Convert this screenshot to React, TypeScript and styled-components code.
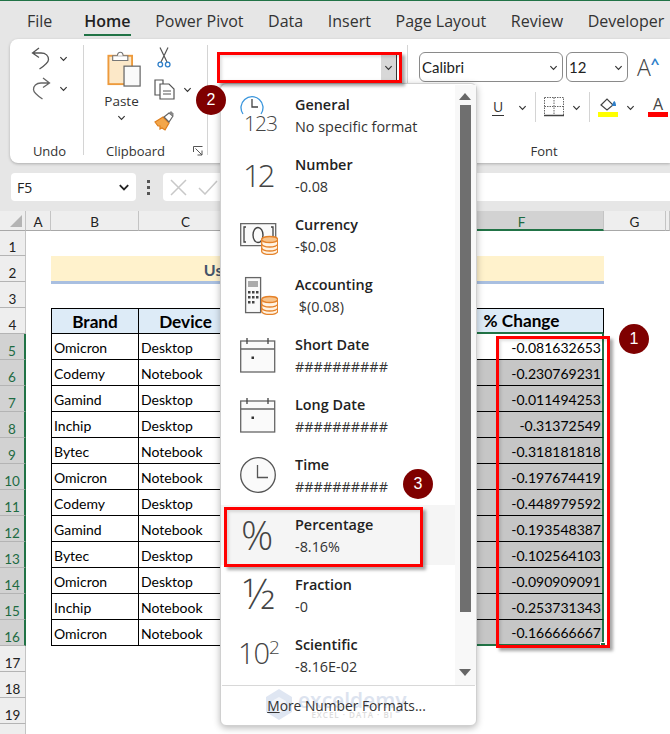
import React from "react";
import styled, { createGlobalStyle } from "styled-components";

const GlobalStyle = createGlobalStyle`
  html, body { margin: 0; padding: 0; background: #e6e6e6; }
  * { box-sizing: border-box; }
`;

const GREEN = "#217346";
const UI_FONT = `"Open Sans", "Noto Sans", sans-serif`;
const CELL_FONT = `Lato, "Liberation Sans", sans-serif`;

const tabs = ["File", "Home", "Power Pivot", "Data", "Insert", "Page Layout", "Review", "Developer"];

const tableRows = [
  ["Omicron", "Desktop", "-0.081632653"],
  ["Codemy", "Notebook", "-0.230769231"],
  ["Gamind", "Desktop", "-0.011494253"],
  ["Inchip", "Desktop", "-0.31372549"],
  ["Bytec", "Notebook", "-0.318181818"],
  ["Omicron", "Notebook", "-0.197674419"],
  ["Codemy", "Desktop", "-0.448979592"],
  ["Gamind", "Notebook", "-0.193548387"],
  ["Bytec", "Desktop", "-0.102564103"],
  ["Omicron", "Desktop", "-0.090909091"],
  ["Inchip", "Notebook", "-0.253731343"],
  ["Omicron", "Notebook", "-0.166666667"],
];

const columns = ["A", "B", "C", "D", "E", "F", "G", ""];

const Chevron: React.FC<{ size?: number; weight?: number; color?: string }> = ({ size = 9, weight = 1.3, color = "#333" }) => (
  <svg width={size} height={size} viewBox="0 0 10 10" fill="none" stroke={color} strokeWidth={weight}>
    <path d="M1.5 3.5 5 7l3.5-3.5" />
  </svg>
);

const UndoIcon = () => (
  <svg width="20" height="23" viewBox="0 0 20 23" fill="none" stroke="#555" strokeWidth="1.3">
    <path d="M8 1 1.5 6 8 10.5M1.5 6H10c5 0 7.5 3 7.5 6.5 0 3-3 5.500-9 9.500" />
  </svg>
);

const RedoIcon = () => (
  <svg width="20" height="23" viewBox="0 0 20 23" fill="none" stroke="#666" strokeWidth="1.3">
    <path d="M12 1 18.500 6 12 10.500M18.500 6H10C5 6 2.500 9 2.500 12.500c0 3 3 5.500 9 9.500" />
  </svg>
);

const PasteIcon = () => (
  <svg width="35" height="38" viewBox="0 0 37 38">
    <rect x="1.500" y="5" width="25" height="30" fill="#fce8c8" stroke="#ed9a3c" strokeWidth="2" />
    <path d="M6 5h16v5H6z" fill="#fff" stroke="#777" strokeWidth="1.200" />
    <path d="M11 5c0-5 6-5 6 0" fill="#fff" stroke="#777" strokeWidth="1.200" />
    <rect x="18" y="16" width="17" height="21" fill="#fafafa" stroke="#666" strokeWidth="1.300" />
  </svg>
);

const ScissorsIcon = () => (
  <svg width="14" height="21" viewBox="0 0 14 21" fill="none">
    <path d="M3 0.500 10 15M11 0.500 4 15" stroke="#555" strokeWidth="1.200" />
    <circle cx="3.300" cy="17.500" r="2.300" stroke="#2f7fc9" strokeWidth="1.300" />
    <circle cx="10.700" cy="17.500" r="2.300" stroke="#2f7fc9" strokeWidth="1.300" />
  </svg>
);

const CopyIcon = () => (
  <svg width="21" height="21" viewBox="0 0 21 21" fill="#fff" stroke="#555" strokeWidth="1.200">
    <path d="M1 1h8v15H1z" />
    <path d="M6 5h9l5 5v10H6z" />
    <path d="M9 12h8M9 15h8" strokeWidth="1" />
  </svg>
);

const BrushIcon = () => (
  <svg width="21" height="20" viewBox="0 0 21 20">
    <path d="M1 11 9 6l6 6-4 7-3-2-2 1 0-3-2 0z" fill="#f3a64a" stroke="#de7e1c" strokeWidth="1.200" />
    <path d="M10 6 15 2l4 3-4 6z" fill="#fff" stroke="#666" strokeWidth="1.200" />
    <path d="M15 2 17 0l3 3-2 2" fill="#888" />
  </svg>
);

const LauncherIcon = () => (
  <svg width="10" height="10" viewBox="0 0 10 10" fill="none" stroke="#555" strokeWidth="1">
    <path d="M.5 6V.5H9.500M2.500 2.500 9 9M9 4.500V9H4.500" />
  </svg>
);

const BordersIcon = () => (
  <svg width="20" height="20" viewBox="0 0 20 20" fill="none" stroke="#666" strokeWidth="1" strokeDasharray="1.500 1">
    <path d="M.5.500h19v18H.5zM10 .5v18M.5 9.500h19" />
    <path d="M0 18.500h20" strokeDasharray="none" strokeWidth="1.500" stroke="#444" />
  </svg>
);

const FillIcon = () => (
  <svg width="18" height="14" viewBox="0 0 18 14">
    <path d="M2 7 8 1l6 6-6 5z" fill="#fff" stroke="#444" strokeWidth="1.200" />
    <path d="M13 8c.5-3 1.500-4.500 2.500-5 1 1 1.500 3 1.500 5z" fill="#2f7fc9" />
  </svg>
);

const CancelIcon = () => (
  <svg width="17" height="17" viewBox="0 0 17 17" fill="none" stroke="#c8c8c8" strokeWidth="1.500">
    <path d="M1 1l15 15M16 1 1 16" />
  </svg>
);

const ConfirmIcon = () => (
  <svg width="20" height="15" viewBox="0 0 20 15" fill="none" stroke="#c8c8c8" strokeWidth="1.500">
    <path d="M1 8l6 6L19 1" />
  </svg>
);

const CoinStack: React.FC<{ x: number; y: number }> = ({ x, y }) => (
  <g transform={`translate(${x} ${y})`} fill="#fff3e3" stroke="#e5822a" strokeWidth="1.300">
    <path d="M.7 3v12.500c0 1.500 3.500 3 8 3s8-1.500 8-3V3" />
    <ellipse cx="8.700" cy="3.500" rx="8" ry="3" fill="#f7c48c" />
    <path d="M.7 8c0 1.500 3.500 3 8 3s8-1.500 8-3M.7 12c0 1.500 3.500 3 8 3s8-1.500 8-3" fill="none" />
  </g>
);

const ClockBadge = () => (
  <svg width="24" height="27" viewBox="0 0 24 27" fill="none">
    <path d="M3 20A11 11 0 1 1 21 20" stroke="#3a96dd" strokeWidth="1.300" />
    <path d="M12 5v8h6" stroke="#444" strokeWidth="1.300" />
  </svg>
);

const BanknoteIcon = () => (
  <svg width="38" height="40" viewBox="0 0 38 40" fill="none">
    <path d="M.7 8.700h35v22H.7z" stroke="#666" strokeWidth="1.300" fill="#fafafa" />
    <path d="M6 12H4v15h2M31 12h2v15h-2" stroke="#444" strokeWidth="1.300" />
    <ellipse cx="18" cy="20" rx="5" ry="7.500" stroke="#444" strokeWidth="1.400" />
    <CoinStack x={21} y={21} />
  </svg>
);

const CalculatorIcon = () => (
  <svg width="38" height="40" viewBox="0 0 38 40" fill="none">
    <rect x="5.600" y="2.600" width="15" height="35" stroke="#666" strokeWidth="1.300" fill="#fafafa" />
    <rect x="8" y="6" width="10" height="6" fill="#aaa" />
    <path d="M8 16h2.500v2.500H8zM12 16h2.500v2.500H12zM16 16h2.500v2.500H16zM8 21h2.500v2.500H8zM12 21h2.500v2.500H12zM16 21h2.500v2.500H16zM8 26h2.500v2.500H8zM12 26h2.500v2.500H12z" fill="#444" />
    <CoinStack x={21} y={21} />
  </svg>
);

const CalendarIcon = () => (
  <svg width="38" height="40" viewBox="0 0 38 40" fill="none" stroke="#666" strokeWidth="1.300">
    <rect x=".7" y="6" width="34" height="31" fill="#fafafa" />
    <path d="M.7 14h34" />
    <path d="M7 3v6M28 3v6" stroke="#444" />
    <rect x="11.500" y="21.500" width="2.500" height="2.500" fill="#333" stroke="none" />
  </svg>
);

const ClockIcon = () => (
  <svg width="38" height="40" viewBox="0 0 38 40" fill="none">
    <circle cx="18" cy="20" r="17.300" stroke="#555" strokeWidth="1.300" fill="#fafafa" />
    <path d="M17.500 10v12.500H28" stroke="#555" strokeWidth="1.300" />
  </svg>
);

const Logo = () => (
  <svg width="26" height="31" viewBox="0 0 26 31">
    <path d="M13 0 26 8v15l-13 8L0 23V8z" fill="#dfe6f2" />
    <path d="M13 8 20 12v8l-7 4-7-4v-8z" fill="#f3f5fa" />
  </svg>
);

export default function App() {
  const formats: { title: string; sample: string; icon: React.ReactNode; active?: boolean }[] = [
    {
      title: "General",
      sample: "No specific format",
      icon: (
        <>
          <ClockOverlay>
            <ClockBadge />
          </ClockOverlay>
          <GlyphText $size={21} $offset={8} $left={4}>123</GlyphText>
        </>
      ),
    },
    { title: "Number", sample: "-0.08", icon: <GlyphText $size={31} $left={3} $tight>12</GlyphText> },
    { title: "Currency", sample: "-$0.08", icon: <BanknoteIcon /> },
    { title: "Accounting", sample: " $(0.08)", icon: <CalculatorIcon /> },
    { title: "Short Date", sample: "##########", icon: <CalendarIcon /> },
    { title: "Long Date", sample: "##########", icon: <CalendarIcon /> },
    { title: "Time", sample: "##########", icon: <ClockIcon /> },
    { title: "Percentage", sample: "-8.16%", icon: <GlyphText $size={40} $left={1}>%</GlyphText>, active: true },
    { title: "Fraction", sample: "-0", icon: <GlyphText $size={42} $left={3} $offset={-2}>½</GlyphText> },
    {
      title: "Scientific",
      sample: "-8.16E-02",
      icon: (
        <GlyphText $size={29} $left={-2}>
          10<GlyphSup>2</GlyphSup>
        </GlyphText>
      ),
    },
  ];

  return (
    <Screen>
      <GlobalStyle />
      <TabBar>
        {tabs.map((tab) => (
          <Tab key={tab} $active={tab === "Home"}>
            {tab}
          </Tab>
        ))}
      </TabBar>

      <Ribbon>
        <RibbonGroup $width={74}>
          <GroupBody>
            <UndoStack>
              <IconRow>
                <UndoIcon />
                <Chevron />
              </IconRow>
              <IconRow>
                <RedoIcon />
                <Chevron />
              </IconRow>
            </UndoStack>
          </GroupBody>
          <GroupLabel $shift={3}>Undo</GroupLabel>
        </RibbonGroup>

        <RibbonGroup $width={124}>
          <GroupBody>
            <ClipboardBody>
              <PasteButton>
                <PasteIcon />
                <PasteLabel>Paste</PasteLabel>
                <Chevron />
              </PasteButton>
              <ClipboardTools>
                <ScissorsIcon />
                <CopyRow>
                  <CopyIcon />
                  <Chevron />
                </CopyRow>
                <BrushIcon />
              </ClipboardTools>
            </ClipboardBody>
          </GroupBody>
          <GroupLabel $shift={-10}>
            Clipboard
            <Launcher>
              <LauncherIcon />
            </Launcher>
          </GroupLabel>
        </RibbonGroup>

        <RibbonGroup $width={200}>
          <GroupBody>
            <FormatCombo>
              <ComboArrow>
                <Chevron />
              </ComboArrow>
            </FormatCombo>
          </GroupBody>
        </RibbonGroup>

        <RibbonGroup $width={272} $last>
          <GroupBody>
            <FontRow>
              <FontCombo $width={144}>
                Calibri
                <Chevron />
              </FontCombo>
              <FontCombo $width={62}>
                12
                <Chevron />
              </FontCombo>
              <GrowGlyph>
                A<Caret>^</Caret>
              </GrowGlyph>
            </FontRow>
            <FontTools>
              <UnderlineGlyph>U</UnderlineGlyph>
              <Chevron />
              <ToolDivider />
              <BordersIcon />
              <Chevron />
              <ToolDivider />
              <Swatch $color="#ffff00">
                <FillIcon />
              </Swatch>
              <Chevron />
              <Swatch $color="#ff0000" $gap={5}>
                <SwatchLetter>A</SwatchLetter>
              </Swatch>
            </FontTools>
          </GroupBody>
          <GroupLabel>Font</GroupLabel>
        </RibbonGroup>
      </Ribbon>

      <FormulaRow>
        <NameBox>
          F5
          <Chevron size={12} weight={1.5} color="#222" />
        </NameBox>
        <Dots>
          <i />
          <i />
          <i />
        </Dots>
        <FormulaBox>
          <CancelIcon />
          <ConfirmIcon />
        </FormulaBox>
      </FormulaRow>

      <Sheet>
        <Corner>
          <CornerMark />
        </Corner>
        {columns.map((col) => (
          <ColHeader key={col} $selected={col === "F"}>
            {col}
          </ColHeader>
        ))}

        <RowHeader>1</RowHeader>
        <BlankRow />

        <RowHeader>2</RowHeader>
        <Blank />
        <TitleCell>Using Percentage Number Formats</TitleCell>
        <Blank />
        <Blank />

        <RowHeader>3</RowHeader>
        <BlankRow />

        <RowHeader>4</RowHeader>
        <Blank />
        <Cell $head $first>Brand</Cell>
        <Cell $head>Device</Cell>
        <Cell $head />
        <Cell $head />
        <Cell $head $last>% Change</Cell>
        <Blank />
        <Blank />

        {tableRows.map(([brand, device, change], i) => (
          <React.Fragment key={i}>
            <RowHeader $selected>{i + 5}</RowHeader>
            <Blank />
            <Cell $first>{brand}</Cell>
            <Cell>{device}</Cell>
            <Cell />
            <Cell />
            <ChangeCell $shaded={i > 0} $bottom={i === tableRows.length - 1}>
              {change}
              {i === tableRows.length - 1 && <FillHandle />}
            </ChangeCell>
            <Blank />
            <Blank />
          </React.Fragment>
        ))}

        {[17, 18, 19].map((n) => (
          <React.Fragment key={n}>
            <RowHeader>{n}</RowHeader>
            <BlankRow />
          </React.Fragment>
        ))}
        <RowHeader />
        <BlankRow />
      </Sheet>

      <FormatMenu>
        <MenuList>
          {formats.map((f) => (
            <MenuItem key={f.title} $active={f.active}>
              <IconSlot>{f.icon}</IconSlot>
              <ItemText>
                <ItemTitle>{f.title}</ItemTitle>
                <ItemSample>{f.sample}</ItemSample>
              </ItemText>
            </MenuItem>
          ))}
        </MenuList>
        <ScrollTrack>
          <ArrowUp />
          <ScrollThumb />
          <ArrowDown />
        </ScrollTrack>
        <MenuFooter>
          <Watermark>
            <Logo />
            <WatermarkText>
              exceldemy
              <small>EXCEL · DATA · BI</small>
            </WatermarkText>
          </Watermark>
          <FooterLabel>
            <u>M</u>ore Number Formats...
          </FooterLabel>
        </MenuFooter>
      </FormatMenu>

      <RedFrame $left={217} $top={52} $width={185} $height={31} />
      <RedFrame $left={224} $top={507} $width={199} $height={60} />
      <RedFrame $left={496} $top={336} $width={114} $height={312} />

      <Badge $left={196} $top={85}>2</Badge>
      <Badge $left={619} $top={324}>1</Badge>
      <Badge $left={403} $top={469}>3</Badge>
    </Screen>
  );
}

const Screen = styled.div`
  position: relative;
  width: 670px;
  height: 734px;
  overflow: hidden;
  background: #e6e6e6;
  border-top: 1px solid ${GREEN};
  font-family: ${UI_FONT};
  color: #222;
`;

const TabBar = styled.div`
  display: flex;
  gap: 24.600px;
  height: 38px;
  padding-left: 27px;
  white-space: nowrap;
`;

const Tab = styled.div<{ $active?: boolean }>`
  position: relative;
  height: 35px;
  padding-top: 9px;
  margin-left: ${(p) => (p.$active ? "7.400px" : "0")};
  font-size: 16px;
  line-height: 22px;
  color: #333;
  font-weight: ${(p) => (p.$active ? 600 : 400)};
  border-bottom: 2px solid ${(p) => (p.$active ? GREEN : "transparent")};
  ${(p) => p.$active && "color: #222;"}
`;

const Ribbon = styled.div`
  display: flex;
  height: 124px;
  margin-left: 10px;
  background: #fff;
  border-radius: 8px 0 0 8px;
  box-shadow: 0 1px 3px rgba(0, 0, 0, 0.25);
  overflow: hidden;
`;

const RibbonGroup = styled.div<{ $width: number; $last?: boolean }>`
  position: relative;
  display: flex;
  flex-direction: column;
  flex: none;
  width: ${(p) => p.$width}px;
  margin: 6px 0 8px;
  border-right: ${(p) => (p.$last ? "none" : "1px solid #d4d4d4")};
`;

const GroupBody = styled.div`
  flex: 1;
  min-height: 0;
`;

const GroupLabel = styled.div<{ $shift?: number }>`
  height: 20px;
  margin-bottom: -6px;
  padding-left: ${(p) => Math.max((p.$shift ?? 0) * 2, 0)}px;
  padding-right: ${(p) => Math.max(-(p.$shift ?? 0) * 2, 0)}px;
  text-align: center;
  font-size: 13px;
  line-height: 20px;
  color: #333;
`;

const UndoStack = styled.div`
  display: flex;
  flex-direction: column;
  gap: 7px;
  padding: 2px 0 0 21px;
`;

const IconRow = styled.div`
  display: flex;
  align-items: center;
  gap: 8px;
`;

const ClipboardBody = styled.div`
  display: flex;
  gap: 16px;
  padding: 5px 0 0 21px;
`;

const PasteButton = styled.div`
  display: flex;
  flex-direction: column;
  align-items: center;
  width: 33px;

  & > svg:first-child {
    flex: none;
    margin-left: 5px;
  }
`;

const PasteLabel = styled.div`
  margin: 3px 0 2px;
  font-size: 13.500px;
  line-height: 20px;
  color: #333;
`;

const ClipboardTools = styled.div`
  display: flex;
  flex-direction: column;
  align-items: flex-start;
  gap: 11px;
  margin-top: -3px;

  & > svg:first-child {
    margin-left: 3px;
  }
`;

const CopyRow = styled.div`
  display: flex;
  align-items: center;
  gap: 8px;
`;

const Launcher = styled.span`
  position: absolute;
  right: 4px;
  bottom: -1px;
  display: flex;
`;

const FormatCombo = styled.div`
  display: flex;
  justify-content: flex-end;
  height: 26px;
  margin: 9px 10px 0 12px;
  background: #fff;
`;

const ComboArrow = styled.div`
  display: flex;
  align-items: center;
  justify-content: center;
  width: 16px;
  background: #d8d8d8;
  border-right: 1px solid #333;
`;

const FontRow = styled.div`
  display: flex;
  align-items: center;
  gap: 3px;
  padding: 7px 0 0 11px;
`;

const FontCombo = styled.div<{ $width: number }>`
  display: flex;
  align-items: center;
  justify-content: space-between;
  width: ${(p) => p.$width}px;
  height: 30px;
  padding: 0 4px 0 2px;
  border: 1px solid #8a8a8a;
  border-radius: 6px;
  font-family: ${CELL_FONT};
  font-size: 15px;
  color: #222;
`;

const GrowGlyph = styled.div`
  display: flex;
  margin-left: 6px;
  font-size: 23px;
  line-height: 30px;
  font-weight: 300;
  color: #444;
`;

const Caret = styled.span`
  margin-top: -4px;
  font-size: 15px;
  font-weight: 700;
  color: #2f7fc9;
`;

const FontTools = styled.div`
  display: flex;
  align-items: center;
  gap: 8px;
  padding: 10px 0 0 84px;
`;

const UnderlineGlyph = styled.div`
  width: 12px;
  margin-right: 6px;
  font-size: 14px;
  line-height: 16px;
  text-align: center;
  color: #333;
  border-bottom: 1px solid #333;
`;

const ToolDivider = styled.div`
  width: 1px;
  height: 30px;
  background: #d4d4d4;
`;

const Swatch = styled.div<{ $color: string; $gap?: number }>`
  display: flex;
  justify-content: center;
  align-items: flex-end;
  width: 20px;
  height: 20px;
  margin-left: ${(p) => p.$gap ?? 0}px;
  border-bottom: 5px solid ${(p) => p.$color};
`;

const SwatchLetter = styled.span`
  font-size: 16px;
  line-height: 15px;
  color: #444;
`;

const FormulaRow = styled.div`
  display: flex;
  align-items: center;
  height: 48px;
  padding-left: 11px;
`;

const NameBox = styled.div`
  display: flex;
  align-items: center;
  justify-content: space-between;
  width: 125px;
  height: 28px;
  padding: 0 6px;
  background: #fff;
  border-radius: 4px;
  font-size: 14px;
  color: #222;
`;

const Dots = styled.div`
  display: flex;
  flex-direction: column;
  gap: 3px;
  margin: 0 13px 0 11px;

  i {
    display: block;
    width: 3px;
    height: 3px;
    background: #555;
  }
`;

const FormulaBox = styled.div`
  display: flex;
  align-items: center;
  gap: 11px;
  flex: 1;
  height: 28px;
  padding-left: 7px;
  background: #fff;
  border-radius: 4px 0 0 4px;
`;

const Sheet = styled.div`
  display: grid;
  grid-template-columns: 26px 25px 88px 94px 103px 104px 164px 62px 4px;
  grid-template-rows: 20px 25px repeat(19, 26px);
  background: #fff;
  font-family: ${CELL_FONT};
  font-size: 14px;
  color: #111;
`;

const Corner = styled.div`
  position: relative;
  background: #eeeeee;
  border-right: 1px solid #c4c4c4;
  border-bottom: 1px solid #a8a8a8;
`;

const CornerMark = styled.div`
  position: absolute;
  right: 3px;
  bottom: 3px;
  width: 0;
  height: 0;
  border-left: 12px solid transparent;
  border-bottom: 12px solid #b4b4b4;
`;

const ColHeader = styled.div<{ $selected?: boolean }>`
  display: flex;
  align-items: center;
  justify-content: center;
  padding-top: 3px;
  font-size: 13.500px;
  color: ${(p) => (p.$selected ? "#1d6b42" : "#222")};
  background: ${(p) => (p.$selected ? "#d2d2d2" : "#eeeeee")};
  border-right: 1px solid #c4c4c4;
  border-bottom: ${(p) => (p.$selected ? `2px solid ${GREEN}` : "1px solid #a8a8a8")};
`;

const RowHeader = styled.div<{ $selected?: boolean }>`
  display: flex;
  align-items: center;
  justify-content: center;
  padding-top: 8px;
  font-size: 13.500px;
  color: ${(p) => (p.$selected ? "#1d6b42" : "#222")};
  background: ${(p) => (p.$selected ? "#d2d2d2" : "#eeeeee")};
  border-bottom: 1px solid #b4b4b4;
  border-right: ${(p) => (p.$selected ? `2px solid ${GREEN}` : "1px solid #c4c4c4")};
`;

const Blank = styled.div`
  min-width: 0;
`;

const BlankRow = styled.div`
  grid-column: 2 / -1;
`;

const TitleCell = styled.div`
  grid-column: span 5;
  display: flex;
  align-items: center;
  justify-content: center;
  white-space: nowrap;
  background: #fff2cc;
  font-size: 16px;
  font-weight: 700;
  color: #44546a;
  box-shadow: inset 0 -1px #a9bfe0, 0 2px #a9bfe0;
`;

const Cell = styled.div<{ $head?: boolean; $first?: boolean; $last?: boolean }>`
  display: flex;
  align-items: center;
  justify-content: ${(p) => (p.$head ? "center" : "flex-start")};
  padding: ${(p) => (p.$head ? "0 2px" : "1px 2px 0")};
  white-space: nowrap;
  border-right: 1px solid #000;
  border-bottom: ${(p) => (p.$last ? `2px solid ${GREEN}` : "1px solid #000")};
  border-left: ${(p) => (p.$first ? "1px solid #000" : "none")};
  border-top: ${(p) => (p.$head ? "1px solid #000" : "none")};
  background: ${(p) => (p.$head ? "#ddebf7" : "#fff")};
  font-size: ${(p) => (p.$head ? "17.200px" : "14px")};
  font-weight: ${(p) => (p.$head ? 700 : 400)};
  color: #000;
`;

const ChangeCell = styled.div<{ $shaded?: boolean; $bottom?: boolean }>`
  position: relative;
  display: flex;
  align-items: center;
  justify-content: flex-end;
  padding: 1px 1px 0 0;
  color: #000;
  background: ${(p) => (p.$shaded ? "#c6c6c6" : "#fff")};
  border-right: 2px solid ${GREEN};
  border-bottom: ${(p) => (p.$bottom ? `2px solid ${GREEN}` : "1px solid #000")};
`;

const FillHandle = styled.div`
  position: absolute;
  right: -4px;
  bottom: -4px;
  width: 6px;
  height: 6px;
  background: ${GREEN};
  border: 1px solid #fff;
`;

const FormatMenu = styled.div`
  position: absolute;
  left: 220px;
  top: 82px;
  display: grid;
  grid-template-columns: 234px 21px;
  grid-template-rows: 600px 40px;
  width: 257px;
  height: 643px;
  padding-top: 1px;
  background: #fff;
  border: 1px solid #d0d0d0;
  border-radius: 6px;
  box-shadow: 0 2px 7px rgba(0, 0, 0, 0.28);
`;

const MenuList = styled.div`
  display: flex;
  flex-direction: column;
`;

const MenuItem = styled.div<{ $active?: boolean }>`
  display: flex;
  align-items: center;
  flex: none;
  height: 60px;
  padding-left: 19px;
  background: ${(p) => (p.$active ? "#f5f5f5" : "transparent")};
`;

const IconSlot = styled.div`
  position: relative;
  display: flex;
  align-items: center;
  flex: none;
  width: 38px;
  height: 40px;
  margin-right: 17px;
  overflow: visible;
`;

const ClockOverlay = styled.div`
  position: absolute;
  left: 0;
  top: -1px;
`;

const GlyphText = styled.div<{ $size: number; $offset?: number; $left?: number; $tight?: boolean }>`
  position: relative;
  margin-left: ${(p) => p.$left ?? 0}px;
  top: ${(p) => p.$offset ?? 0}px;
  font-size: ${(p) => p.$size}px;
  line-height: 40px;
  font-weight: 300;
  letter-spacing: ${(p) => (p.$tight ? "-3px" : "-1px")};
  white-space: nowrap;
  color: #444;
`;

const GlyphSup = styled.span`
  position: relative;
  top: -10px;
  font-size: 19px;
`;

const ItemText = styled.div`
  display: flex;
  flex-direction: column;
  gap: 2px;
  margin-top: 2px;
`;

const ItemTitle = styled.div`
  font-size: 14.400px;
  line-height: 20px;
  font-weight: 600;
  color: #222;
`;

const ItemSample = styled.div`
  font-size: 14.400px;
  line-height: 20px;
  color: #333;
  white-space: pre;
`;

const ScrollTrack = styled.div`
  display: flex;
  flex-direction: column;
  align-items: center;
  padding: 8px 1px 0 0;
  background: #f8f8f8;
`;

const ArrowUp = styled.div`
  width: 0;
  height: 0;
  border-left: 6px solid transparent;
  border-right: 6px solid transparent;
  border-bottom: 7px solid #666;
`;

const ArrowDown = styled.div`
  width: 0;
  height: 0;
  margin-top: 57px;
  border-left: 6px solid transparent;
  border-right: 6px solid transparent;
  border-top: 7px solid #666;
`;

const ScrollThumb = styled.div`
  width: 11px;
  height: 507px;
  margin-top: 5px;
  background: #6f6f6f;
`;

const MenuFooter = styled.div`
  position: relative;
  grid-column: span 2;
  display: flex;
  align-items: center;
  justify-content: center;
  margin: 0 1px;
  padding-right: 4px;
  border-top: 1px solid #d8d8d8;
`;

const Watermark = styled.div`
  position: absolute;
  left: 44px;
  top: 3px;
  display: flex;
  align-items: center;
  gap: 6px;
`;

const WatermarkText = styled.div`
  display: flex;
  flex-direction: column;
  align-items: center;
  font-size: 21px;
  line-height: 20px;
  font-weight: 600;
  color: #dce3ef;

  small {
    font-size: 8px;
    line-height: 9px;
    letter-spacing: 1px;
    color: #dcdcdc;
  }
`;

const FooterLabel = styled.div`
  position: relative;
  font-size: 13.800px;
  color: #333;
`;

const RedFrame = styled.div<{ $left: number; $top: number; $width: number; $height: number }>`
  position: absolute;
  left: ${(p) => p.$left}px;
  top: ${(p) => p.$top - 1}px;
  width: ${(p) => p.$width}px;
  height: ${(p) => p.$height}px;
  border: 3px solid #f00;
  box-shadow: 3px 3px 3px rgba(0, 0, 0, 0.35), inset 2px 2px 3px rgba(0, 0, 0, 0.12);
`;

const Badge = styled.div<{ $left: number; $top: number }>`
  position: absolute;
  left: ${(p) => p.$left}px;
  top: ${(p) => p.$top - 1}px;
  display: flex;
  align-items: center;
  justify-content: center;
  width: 30px;
  height: 30px;
  border-radius: 50%;
  background: #7f0000;
  font-family: "Liberation Sans", sans-serif;
  font-size: 16px;
  color: #fff;
`;
